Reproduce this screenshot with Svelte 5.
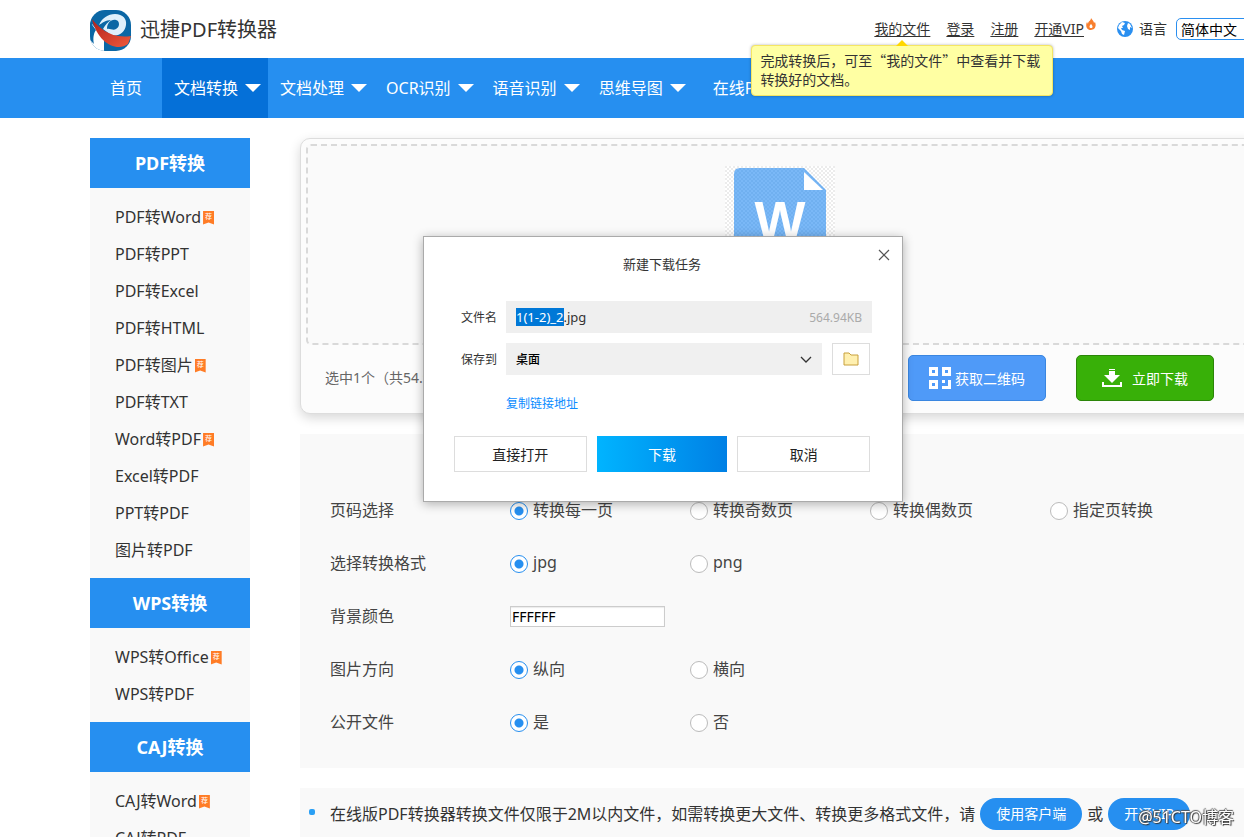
<script lang="ts">
    import { onMount } from 'svelte';

    const nav = [
        { label: '文档转换', active: true },
        { label: '文档处理' },
        { label: 'OCR识别' },
        { label: '语音识别' },
        { label: '思维导图' }
    ];

    const groups = [
        {
            title: 'PDF转换',
            items: [
                { name: 'PDF转Word', hot: true },
                { name: 'PDF转PPT' },
                { name: 'PDF转Excel' },
                { name: 'PDF转HTML' },
                { name: 'PDF转图片', hot: true },
                { name: 'PDF转TXT' },
                { name: 'Word转PDF', hot: true },
                { name: 'Excel转PDF' },
                { name: 'PPT转PDF' },
                { name: '图片转PDF' }
            ]
        },
        {
            title: 'WPS转换',
            items: [{ name: 'WPS转Office', hot: true }, { name: 'WPS转PDF' }]
        },
        {
            title: 'CAJ转换',
            items: [{ name: 'CAJ转Word', hot: true }, { name: 'CAJ转PDF' }]
        }
    ];

    const pageRow = { id: 'page', label: '页码选择', options: ['转换每一页', '转换奇数页', '转换偶数页', '指定页转换'] };
    const formatRow = { id: 'format', label: '选择转换格式', options: ['jpg', 'png'] };
    const directionRow = { id: 'direction', label: '图片方向', options: ['纵向', '横向'] };
    const publicRow = { id: 'public', label: '公开文件', options: ['是', '否'] };

    let picked = $state({ page: '转换每一页', format: 'jpg', direction: '纵向', public: '是' });
    let color = $state('FFFFFF');
    let fileName = $state('1(1-2)_2.jpg');
    let dialogOpen = $state(true);
    let nameInput: HTMLInputElement;

    // select the name without its extension
    onMount(() => {
        nameInput.focus();
        nameInput.setSelectionRange(0, fileName.lastIndexOf('.'));
    });
</script>

{#snippet radioRow(row)}
    <div class="row" role="radiogroup" aria-label={row.label}>
        <span class="row-label">{row.label}</span>
        {#each row.options as option}
            <label class="option">
                <input type="radio" name={row.id} value={option} bind:group={picked[row.id]} />
                <span>{option}</span>
            </label>
        {/each}
    </div>
{/snippet}

<div class="page">
    <header class="container top">
        <a href="/" class="brand">
            <svg width="41" height="41" viewBox="0 0 41 41">
                <defs>
                    <clipPath id="logo-clip"><rect width="41" height="41" rx="15" /></clipPath>
                    <linearGradient id="logo-red" x1="0" y1="0" x2="1" y2="1">
                        <stop offset="0" stop-color="#b3201a" />
                        <stop offset="1" stop-color="#ee5a3c" />
                    </linearGradient>
                </defs>
                <g clip-path="url(#logo-clip)">
                    <rect width="41" height="41" fill="#0b67a5" />
                    <path d="M2 14 L14 28 L14 41 L0 41 L0 22 Z" fill="#fff" />
                    <path d="M0 12 L6 20 C3 24 3 30 4 34 L0 30 Z" fill="#0b67a5" />
                    <path d="M9 15 C12 8 18 4 25 4 C33 4 37 9 36 15 C35 22 29 27 21 25 L13 19 C15 15 18 12 21 10 C16 10 12 13 9 15 Z" fill="#dff0fb" />
                    <path d="M17 19 C17 13 21 9 26 10 C30 11 30 17 26 19 C23 21 20 18 17 19 Z" fill="#0b67a5" />
                    <path d="M2 9 C9 18 21 29 41 26 L38 34 C27 42 8 34 2 9 Z" fill="url(#logo-red)" />
                </g>
            </svg>
            <span>迅捷PDF转换器</span>
        </a>
        <div class="user">
            <span class="files">
                <a href="/files">我的文件</a>
                <span class="tip">完成转换后，可至“我的文件”中查看并下载转换好的文档。</span>
            </span>
            <a href="/login">登录</a>
            <a href="/register">注册</a>
            <span class="vip">
                <a href="/vip">开通VIP</a>
                <svg class="flame" width="10" height="12" viewBox="0 0 10 12">
                    <path d="M5 0 C6 2 8 3 8 5 L9 4 C11 9 8 12 5 12 C1 12 -1 8 1 4 L2 6 C2 3 5 3 5 0 Z" fill="#f87e2d" />
                    <path d="M5 6 C7 8 7 10 5 10 C3 10 3 8 5 6 Z" fill="#fff" />
                </svg>
            </span>
            <label class="lang">
                <svg width="16" height="16" viewBox="0 0 16 16">
                    <circle cx="8" cy="8" r="8" fill="#2a8ff0" />
                    <path d="M2 4 L5 1 L8 2 L7 4 L5 5 L6 7 L4 7 L5 9 L8 10 L7 14 L5 13 L4 10 L1 7 Z" fill="#fff" />
                    <path d="M11 2 L13 3 L15 7 L13 6 L13 9 L11 8 L10 5 Z" fill="#fff" />
                </svg>
                语言
                <select>
                    <option>简体中文</option>
                    <option>English</option>
                </select>
            </label>
        </div>
    </header>

    <nav class="nav">
        <div class="container menu">
            <a href="/" class="plain">首页</a>
            {#each nav as item}
                <a href="/" class:active={item.active}>{item.label}<i class="caret"></i></a>
            {/each}
            <a href="/" class="plain">在线PDF</a>
            <a href="/" class="plain">软件下载</a>
        </div>
    </nav>

    <div class="container body">
        <aside class="side">
            {#each groups as group}
                <h2>{group.title}</h2>
                <ul>
                    {#each group.items as item}
                        <li>
                            <a href="/">{item.name}</a>
                            {#if item.hot}<span class="badge">荐</span>{/if}
                        </li>
                    {/each}
                </ul>
            {/each}
        </aside>

        <main>
            <section class="upload">
                <div class="drop">
                    <svg width="110" height="110" viewBox="0 0 110 110">
                        <defs>
                            <pattern id="checks" width="4" height="4" patternUnits="userSpaceOnUse">
                                <rect width="2" height="2" fill="#ececec" />
                                <rect x="2" y="2" width="2" height="2" fill="#ececec" />
                            </pattern>
                            <pattern id="dots" width="4" height="4" patternUnits="userSpaceOnUse">
                                <rect width="4" height="4" fill="#7ab8f7" />
                                <rect width="2" height="2" fill="#70b0f0" />
                                <rect x="2" y="2" width="2" height="2" fill="#70b0f0" />
                            </pattern>
                        </defs>
                        <rect width="110" height="110" fill="#fff" />
                        <rect width="110" height="110" fill="url(#checks)" />
                        <path d="M15 2 H79 L101 24 V108 H9 V8 Q9 2 15 2 Z" fill="url(#dots)" />
                        <path d="M79 6 V24 H98 Z" fill="#fff" />
                        <text class="letter" x="55" y="73" text-anchor="middle">W</text>
                    </svg>
                </div>
                <div class="status">
                    <span>选中1个（共54.94KB）</span>
                    <button class="qr">
                        <svg width="22" height="22" viewBox="0 0 22 22" fill="#fff">
                            <path fill-rule="evenodd" d="M0 0h9v9H0zM3 3v3h3V3zM13 0h9v9h-9zM16 3v3h3V3zM0 13h9v9H0zM3 16v3h3v-3z" />
                            <path d="M13 13h3v3h-3zM19 13h3v9h-9v-3h6z" />
                        </svg>
                        获取二维码
                    </button>
                    <button class="now">
                        <svg width="20" height="18" viewBox="0 0 20 18" fill="#fff">
                            <path d="M7 0h6v1H7zM7 2h6v4h5l-8 8-8-8h5zM0 13h2v3h16v-3h2v5H0z" />
                        </svg>
                        立即下载
                    </button>
                </div>
            </section>

            <section class="settings">
                {@render radioRow(pageRow)}
                {@render radioRow(formatRow)}
                <div class="row">
                    <label class="row-label" for="color">背景颜色</label>
                    <input id="color" class="color" type="text" bind:value={color} />
                </div>
                {@render radioRow(directionRow)}
                {@render radioRow(publicRow)}
            </section>

            <section class="notes">
                <ul>
                    <li>
                        在线版PDF转换器转换文件仅限于2M以内文件，如需转换更大文件、转换更多格式文件，请
                        <a href="/client">使用客户端</a>
                        或
                        <a href="/vip">开通VIP</a>
                    </li>
                </ul>
            </section>
        </main>
    </div>
</div>

{#if dialogOpen}
    <div class="dialog" role="dialog" aria-labelledby="dialog-title">
        <button class="close" aria-label="关闭" onclick={() => (dialogOpen = false)}>
            <svg width="12" height="12" viewBox="0 0 12 12" stroke="#555" stroke-width="1.2">
                <path d="M1 1 L11 11 M11 1 L1 11" />
            </svg>
        </button>
        <h1 id="dialog-title">新建下载任务</h1>
        <div class="field">
            <label for="file-name">文件名</label>
            <div class="name-box">
                <input id="file-name" type="text" spellcheck="false" bind:this={nameInput} bind:value={fileName} />
                <span>564.94KB</span>
            </div>
        </div>
        <div class="field">
            <label for="save-to">保存到</label>
            <div class="folder-box">
                <select id="save-to">
                    <option>桌面</option>
                </select>
                <svg class="chevron" width="12" height="8" viewBox="0 0 12 8" fill="none" stroke="#333" stroke-width="1.3">
                    <path d="M1 1 L6 6 L11 1" />
                </svg>
            </div>
            <button class="browse" aria-label="浏览">
                <svg width="16" height="14" viewBox="0 0 16 14">
                    <path d="M1 1 H6 L8 3 H15 V13 H1 Z" fill="#fff0b0" stroke="#c8a03c" />
                </svg>
            </button>
        </div>
        <a href="/" class="copy">复制链接地址</a>
        <div class="actions">
            <button>直接打开</button>
            <button class="primary">下载</button>
            <button onclick={() => (dialogOpen = false)}>取消</button>
        </div>
    </div>
{/if}

<div class="watermark">@51CTO博客</div>

<style>
    :global(body) {
        background: #fff;
        color: #333;
        font-family: "Noto Sans", "Noto Sans CJK SC", sans-serif;
        font-size: 16px;
    }

    .page {
        height: 100vh;
        overflow: hidden;
    }

    .container {
        box-sizing: border-box;
        min-width: 1260px;
        padding-left: 90px;
    }

    a {
        color: inherit;
        text-decoration: none;
    }

    button,
    input,
    select {
        box-sizing: border-box;
        margin: 0;
        font-family: inherit;
    }

    ul {
        margin: 0;
        padding: 0;
        list-style: none;
    }

    .top {
        display: flex;
        align-items: center;
        justify-content: space-between;
        width: 1260px;
        height: 58px;
    }

    .brand {
        display: flex;
        align-items: center;
        gap: 9px;
        padding-top: 3px;
        font-size: 20px;
        line-height: 38px;
    }

    .brand span {
        padding-bottom: 2px;
    }

    .user {
        display: flex;
        align-items: center;
        gap: 16px;
        font-size: 14px;
        line-height: 20px;
    }

    .user a {
        text-decoration: underline;
        text-underline-offset: 2px;
    }

    .files {
        position: relative;
    }

    .files::after {
        content: "";
        position: absolute;
        z-index: 3;
        top: 21px;
        left: 22px;
        border: 6px solid transparent;
        border-top: 0;
        border-bottom-color: #ffd700;
    }

    .tip {
        position: absolute;
        z-index: 2;
        top: 26px;
        right: -123px;
        box-sizing: border-box;
        width: 302px;
        padding: 5px 8px 6px;
        border: 1px solid #f5e663;
        border-radius: 4px;
        background: #ffffa3;
        box-shadow: 0 0 3px rgba(0, 0, 0, 0.3);
        font-family: "Noto Sans CJK SC", sans-serif;
        line-height: 19px;
    }

    .vip {
        display: flex;
        align-items: center;
        gap: 2px;
    }

    .flame {
        margin-bottom: 10px;
    }

    .lang {
        display: flex;
        align-items: center;
        gap: 6px;
        margin-left: 5px;
    }

    .lang select {
        appearance: none;
        width: 84px;
        height: 22px;
        margin-left: 3px;
        padding: 0 4px;
        border: 1px solid #2a8ff0;
        border-radius: 5px;
        background: #fff;
        color: #000;
        font-size: 14px;
    }

    .nav {
        background: #268ff0;
        color: #fff;
    }

    .menu {
        display: flex;
        line-height: 60px;
    }

    .menu a {
        display: flex;
        align-items: center;
        gap: 7px;
        height: 60px;
        padding: 0 8px 0 12px;
        white-space: nowrap;
    }

    .menu a.plain {
        padding: 0 20px;
    }

    .menu a.active {
        background: #0570d8;
    }

    .caret {
        border: 8px solid transparent;
        border-top-color: #fff;
        border-bottom: 0;
        margin-right: -1px;
    }

    .body {
        display: flex;
        align-items: flex-start;
        gap: 50px;
        width: 1260px;
        padding-top: 20px;
    }

    .side {
        flex: none;
        width: 160px;
        background: #f9f9f9;
    }

    .side h2 {
        margin: 0;
        background: #268ff0;
        color: #fff;
        font-size: 18px;
        line-height: 50px;
        text-align: center;
    }

    .side ul {
        padding: 11px 0 9px 25px;
    }

    .side li {
        display: flex;
        align-items: center;
        gap: 2px;
        line-height: 37px;
    }

    .badge {
        width: 11px;
        height: 14px;
        background: #ff7c26;
        clip-path: polygon(0 0, 100% 0, 100% 100%, 50% 85%, 0 100%);
        color: #fff;
        font-size: 7px;
        line-height: 12px;
        text-align: center;
    }

    main {
        flex: 1;
        min-width: 0;
    }

    .upload {
        padding: 5px;
        border: 1px solid #ddd;
        border-radius: 10px;
        background: #fcfcfc;
        box-shadow: 0 4px 12px rgba(0, 0, 0, 0.16);
    }

    .drop {
        display: flex;
        justify-content: center;
        height: 177px;
        padding-top: 20px;
        border: 2px dashed #d9d9d9;
        border-radius: 5px;
        background: #fafafa;
    }

    .letter {
        fill: #fff;
        font-family: "Liberation Sans", sans-serif;
        font-size: 54px;
        font-weight: 700;
    }

    .status {
        display: flex;
        align-items: center;
        gap: 30px;
        padding: 10px 40px 7px 19px;
        color: #666;
        font-size: 14px;
    }

    .status span {
        flex: 1;
        padding-bottom: 2px;
    }

    .status button {
        display: flex;
        align-items: center;
        justify-content: center;
        gap: 4px;
        width: 138px;
        height: 46px;
        padding: 0 0 1px;
        border: 1px solid #3a86e0;
        border-radius: 5px;
        background: #4f9af8;
        color: #fff;
        font-size: 14px;
    }

    .status .now {
        gap: 10px;
        border-color: #2b8508;
        background: #38b008;
    }

    .settings {
        margin-top: 20px;
        padding: 50px 30px 19px;
        background: #f9f9f9;
        color: #444;
    }

    .row {
        display: flex;
        align-items: center;
        height: 53px;
    }

    .row-label,
    .option {
        width: 180px;
    }

    .row-label,
    .option span {
        padding-bottom: 3px;
    }

    .option {
        display: flex;
        align-items: center;
        gap: 5px;
    }

    .option input {
        appearance: none;
        width: 18px;
        height: 18px;
        border: 1px solid #bbb;
        border-radius: 50%;
        background: #fff;
    }

    .option input:checked {
        border-color: #268ff0;
        background: radial-gradient(circle, #268ff0 4px, #fff 5px);
    }

    .color {
        width: 155px;
        height: 21px;
        padding: 0 1px;
        border: 1px solid #ccc;
        background: #fff;
        box-shadow: inset 0 1px 1px rgba(0, 0, 0, 0.08);
        color: #000;
        font-size: 14px;
    }

    .notes {
        margin-top: 20px;
        padding: 10px 0;
        background: #f9f9f9;
    }

    .notes li {
        display: flex;
        align-items: center;
        gap: 5px;
        line-height: 32px;
        white-space: nowrap;
    }

    .notes li::before {
        content: "";
        width: 6px;
        height: 6px;
        margin: 0 10px 5px 9px;
        border-radius: 2px;
        background: #2ba0f5;
    }

    .notes a {
        padding: 0 16px;
        border-radius: 16px;
        background: #268ff0;
        color: #fff;
        font-size: 14px;
    }

    .dialog {
        position: absolute;
        z-index: 5;
        top: 236px;
        left: 423px;
        box-sizing: border-box;
        width: 480px;
        padding: 17px 32px 29px 30px;
        border: 1px solid #aaa;
        background: #fff;
        box-shadow: 0 2px 10px rgba(0, 0, 0, 0.3);
        font-size: 12px;
    }

    .dialog h1 {
        margin: 0 0 27px;
        font-size: 13px;
        font-weight: 400;
        line-height: 20px;
        text-align: center;
    }

    .close {
        position: absolute;
        top: 12px;
        right: 12px;
        display: flex;
        padding: 0;
        border: 0;
        background: none;
    }

    .field {
        display: flex;
        align-items: center;
        height: 32px;
        margin-bottom: 10px;
        padding-left: 7px;
    }

    .field label {
        width: 45px;
    }

    .name-box {
        display: flex;
        align-items: center;
        flex: 1;
        height: 32px;
        margin-right: -2px;
        padding: 0 10px;
        background: #efefef;
    }

    .name-box input {
        flex: 1;
        min-width: 0;
        height: 18px;
        padding: 0;
        border: 0;
        outline: 0;
        background: none;
        color: #333;
        font-size: 13px;
    }

    .name-box input::selection {
        background: #0078d7;
        color: #fff;
    }

    .name-box span {
        color: #aaa;
    }

    .folder-box {
        position: relative;
        flex: 1;
    }

    .folder-box select {
        appearance: none;
        display: block;
        width: 100%;
        height: 32px;
        padding: 0 10px;
        border: 0;
        border-radius: 0;
        background: #f0f0f0;
        color: #000;
        font-size: 12px;
        font-weight: 500;
    }

    .chevron {
        position: absolute;
        top: 13px;
        right: 10px;
        pointer-events: none;
    }

    .browse {
        display: flex;
        align-items: center;
        justify-content: center;
        width: 38px;
        height: 32px;
        margin-left: 10px;
        border: 1px solid #ddd;
        background: #fff;
    }

    .copy {
        display: block;
        width: max-content;
        margin: 19px 0 22px 52px;
        color: #0a8cff;
        line-height: 20px;
    }

    .actions {
        display: flex;
        gap: 10px;
    }

    .actions button {
        flex: 1;
        height: 36px;
        border: 1px solid #ddd;
        background: #fff;
        color: #222;
        font-size: 14px;
    }

    .actions .primary {
        border: 0;
        background: linear-gradient(90deg, #00b4ff, #0080e5);
        color: #fff;
    }

    .watermark {
        position: fixed;
        z-index: 6;
        right: 10px;
        bottom: 8px;
        color: #fff;
        font-size: 16px;
        line-height: 24px;
        text-shadow: 1px 1px 1px #333, -1px 0 1px #555, 0 -1px 1px #555;
    }
</style>
